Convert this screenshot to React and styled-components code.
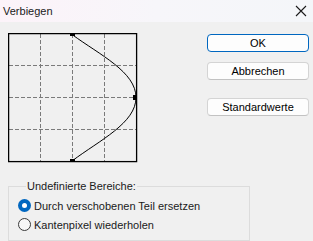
import React, { useState } from 'react';
import styled, { createGlobalStyle } from 'styled-components';

const GlobalStyle = createGlobalStyle`
    html, body {
        margin: 0;
        padding: 0;
        background: #f0f0f0;
    }
    * {
        box-sizing: border-box;
    }
`;

function App() {
    const [mode, setMode] = useState('shift');

    return (
        <Window>
            <GlobalStyle />
            <TitleBar>
                <Title>Verbiegen</Title>
                <CloseIcon width="12" height="12" viewBox="0 0 12 12">
                    <path d="M1 1 L11 11 M11 1 L1 11" stroke="#1a1a1a" strokeWidth="1.1" fill="none" />
                </CloseIcon>
            </TitleBar>
            <Main>
                <Graph width="130" height="130" viewBox="0 0 130 130">
                    {[32, 64, 96].map((p) => (
                        <g key={p}>
                            <line x1={p + 0.5} y1="1" x2={p + 0.5} y2="128" stroke="#7a7a7a" strokeDasharray="4 2" />
                            <line x1="1" y1={p + 0.5} x2="128" y2={p + 0.5} stroke="#7a7a7a" strokeDasharray="4 2" />
                        </g>
                    ))}
                    <rect x="0.6" y="0.6" width="128" height="128" fill="none" stroke="#000" strokeWidth="1.3" />
                    <path d="M64 1.5 C92 22 128 39 128 64.5 C128 90 92 107 64 128" fill="none" stroke="#000" strokeWidth="1" />
                    <rect x="62" y="0" width="5" height="3" fill="#000" />
                    <rect x="125" y="62" width="3" height="5" fill="#000" />
                    <rect x="62" y="126" width="5" height="3" fill="#000" />
                </Graph>
                <Buttons>
                    <Button primary>OK</Button>
                    <Button>Abbrechen</Button>
                    <Button spaced>Standardwerte</Button>
                </Buttons>
            </Main>
            <Group>
                <Legend>Undefinierte Bereiche:</Legend>
                <RadioRow onClick={() => setMode('shift')}>
                    <Radio checked={mode === 'shift'} />
                    <span>Durch verschobenen Teil ersetzen</span>
                </RadioRow>
                <RadioRow onClick={() => setMode('edge')}>
                    <Radio checked={mode === 'edge'} />
                    <span>Kantenpixel wiederholen</span>
                </RadioRow>
            </Group>
        </Window>
    );
}

const Window = styled.div`
    width: 313px;
    height: 241px;
    background: #f0f0f0;
    font-family: "Liberation Sans", Arial, sans-serif;
    font-size: 11px;
    color: #000;
    display: flex;
    flex-direction: column;
    overflow: hidden;
`;

const TitleBar = styled.div`
    height: 22px;
    display: flex;
    align-items: center;
    justify-content: space-between;
    padding: 0 6px 1px 3px;
    background: linear-gradient(90deg, #fcf3f9 0%, #f7f6fa 50%, #f4f6f9 100%);
`;

const Title = styled.div`
    font-size: 11px;
    color: #1a1a1a;
`;

const CloseIcon = styled.svg`
    display: block;
`;

const Main = styled.div`
    display: flex;
    align-items: flex-start;
    padding: 11px 0 0 8px;
`;

const Graph = styled.svg`
    display: block;
    flex: none;
`;

const Buttons = styled.div`
    display: flex;
    flex-direction: column;
    gap: 10px;
    margin: 1px 0 0 69px;
`;

const Button = styled.button`
    width: 102px;
    height: 18px;
    padding: 0;
    margin-top: ${(p) => (p.spaced ? '8px' : '0')};
    font-family: inherit;
    font-size: 11px;
    line-height: 14px;
    color: #000;
    background: #fdfdfd;
    border: ${(p) => (p.primary ? '1.5px solid #0067c0' : '1px solid #d4d4d4')};
    border-bottom-color: ${(p) => (p.primary ? '#0067c0' : '#c2c2c2')};
    border-radius: 4px;
`;

const Group = styled.fieldset`
    margin: 16px 0 0 8px;
    width: 242px;
    height: 62px;
    padding: 4px 0 0 9px;
    border: 1px solid #dcdcdc;
    display: flex;
    flex-direction: column;
    gap: 4px;
`;

const Legend = styled.legend`
    padding: 0 1px;
    margin-left: 8px;
    line-height: 15px;
    color: #1a1a1a;
`;

const RadioRow = styled.div`
    display: flex;
    align-items: center;
    gap: 3px;
    height: 15px;
    color: #1a1a1a;
    cursor: default;
`;

const Radio = styled.span`
    width: 13px;
    height: 13px;
    border-radius: 50%;
    flex: none;
    background: ${(p) => (p.checked ? '#0067c0' : '#f7f7f7')};
    border: ${(p) => (p.checked ? 'none' : '1px solid #3a3a3a')};
    display: flex;
    align-items: center;
    justify-content: center;
    &::after {
        content: "";
        display: ${(p) => (p.checked ? 'block' : 'none')};
        width: 5px;
        height: 5px;
        border-radius: 50%;
        background: #fff;
    }
`;

export default App;
